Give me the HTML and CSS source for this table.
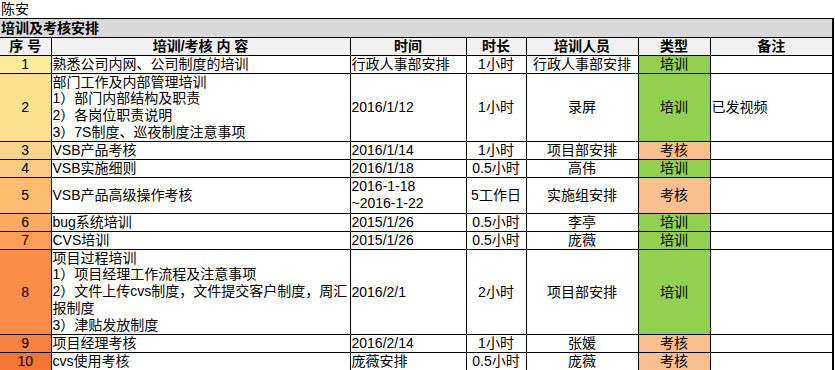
FILE: index.html
```html
<!DOCTYPE html>
<html lang="zh-CN">
<head>
<meta charset="utf-8">
<title>培训及考核安排</title>
<link rel="stylesheet" href="styles.css">
</head>
<body>
<div class="owner">陈安</div>
<div class="frame">
<table class="sheet">
  <colgroup>
    <col class="c1"><col class="c2"><col class="c3"><col class="c4"><col class="c5"><col class="c6"><col class="c7">
  </colgroup>
  <tr class="h18 title"><td colspan="7">培训及考核安排</td></tr>
  <tr class="h18 head">
    <td class="ctr">序 号</td>
    <td class="ctr">培训/考核 内 容</td>
    <td class="ctr">时间</td>
    <td class="ctr">时长</td>
    <td class="ctr">培训人员</td>
    <td class="ctr">类型</td>
    <td class="ctr">备注</td>
  </tr>
  <tr class="h18">
    <td class="no n1">1</td>
    <td>熟悉公司内网、公司制度的培训</td>
    <td>行政人事部安排</td>
    <td class="ctr">1小时</td>
    <td class="ctr">行政人事部安排</td>
    <td class="ctr train">培训</td>
    <td></td>
  </tr>
  <tr class="h68">
    <td class="no n2">2</td>
    <td class="multi">部门工作及内部管理培训<br>1）部门内部结构及职责<br>2）各岗位职责说明<br>3）7S制度、巡夜制度注意事项</td>
    <td>2016/1/12</td>
    <td class="ctr">1小时</td>
    <td class="ctr">录屏</td>
    <td class="ctr train">培训</td>
    <td>已发视频</td>
  </tr>
  <tr class="h18">
    <td class="no n3">3</td>
    <td>VSB产品考核</td>
    <td>2016/1/14</td>
    <td class="ctr">1小时</td>
    <td class="ctr">项目部安排</td>
    <td class="ctr exam">考核</td>
    <td></td>
  </tr>
  <tr class="h18">
    <td class="no n4">4</td>
    <td>VSB实施细则</td>
    <td>2016/1/18</td>
    <td class="ctr">0.5小时</td>
    <td class="ctr">高伟</td>
    <td class="ctr train">培训</td>
    <td></td>
  </tr>
  <tr class="h36">
    <td class="no n5">5</td>
    <td>VSB产品高级操作考核</td>
    <td class="multi">2016-1-18<br>~2016-1-22</td>
    <td class="ctr">5工作日</td>
    <td class="ctr">实施组安排</td>
    <td class="ctr exam">考核</td>
    <td></td>
  </tr>
  <tr class="h18">
    <td class="no n6">6</td>
    <td>bug系统培训</td>
    <td>2015/1/26</td>
    <td class="ctr">0.5小时</td>
    <td class="ctr">李亭</td>
    <td class="ctr train">培训</td>
    <td></td>
  </tr>
  <tr class="h18">
    <td class="no n7">7</td>
    <td>CVS培训</td>
    <td>2015/1/26</td>
    <td class="ctr">0.5小时</td>
    <td class="ctr">庞薇</td>
    <td class="ctr train">培训</td>
    <td></td>
  </tr>
  <tr class="h85">
    <td class="no n8">8</td>
    <td class="multi">项目过程培训<br>1）项目经理工作流程及注意事项<br>2）文件上传cvs制度，文件提交客户制度，周汇<br>报制度<br>3）津贴发放制度</td>
    <td>2016/2/1</td>
    <td class="ctr">2小时</td>
    <td class="ctr">项目部安排</td>
    <td class="ctr train">培训</td>
    <td></td>
  </tr>
  <tr class="h18">
    <td class="no n9">9</td>
    <td>项目经理考核</td>
    <td>2016/2/14</td>
    <td class="ctr">1小时</td>
    <td class="ctr">张媛</td>
    <td class="ctr exam">考核</td>
    <td></td>
  </tr>
  <tr class="h18">
    <td class="no n10">10</td>
    <td>cvs使用考核</td>
    <td>庞薇安排</td>
    <td class="ctr">0.5小时</td>
    <td class="ctr">庞薇</td>
    <td class="ctr exam">考核</td>
    <td></td>
  </tr>
</table>
</div>
</body>
</html>
```
FILE: styles.css
```css
html, body {
  margin: 0;
  padding: 0;
  background: #ffffff;
}
body {
  font-family: "Liberation Sans", "Noto Sans CJK SC", sans-serif;
  font-size: 14px;
  color: #000000;
}
.owner {
  height: 18px;
  line-height: 18px;
  padding-left: 1px;
}
.frame {
  width: 832px;
  border-top: 2px solid #000;
  border-right: 2px solid #000;
}
.sheet {
  border-collapse: collapse;
  table-layout: fixed;
  width: 832px;
  margin-top: -1px;
}
.c1 { width: 51px; }
.c2 { width: 299px; }
.c3 { width: 116px; }
.c4 { width: 60px; }
.c5 { width: 112px; }
.c6 { width: 72px; }
.c7 { width: 122px; }
.sheet td {
  border: 1px solid #000;
  padding: 0 1px;
  line-height: 16px;
  white-space: nowrap;
  overflow: hidden;
  vertical-align: middle;
  text-align: left;
}
.sheet tr > td:first-child { border-left: none; }
.sheet tr > td:last-child { border-right: none; }
.sheet tr:first-child > td { border-top: none; }
.h18 { height: 18px; }
.h36 { height: 36px; }
.h68 { height: 68px; }
.h85 { height: 85px; }
.sheet td.multi { line-height: 16.8px; }
.sheet td.ctr { text-align: center; }
.title td {
  background: #d9d9d9;
  font-weight: bold;
}
.head td {
  background: #f2f2f2;
  font-weight: bold;
}
.sheet td.no { text-align: center; }
.n1 { background: #ffeb9c; }
.n2 { background: #ffe08e; }
.n3 { background: #fdd589; }
.n4 { background: #fdcb80; }
.n5 { background: #fcbd72; }
.n6 { background: #fbaa62; }
.n7 { background: #fb9e55; }
.n8 { background: #fa8e47; }
.n9 { background: #f98240; }
.n10 { background: #f77433; }
.train { background: #92d050; }
.exam { background: #f9bf8f; }
```
